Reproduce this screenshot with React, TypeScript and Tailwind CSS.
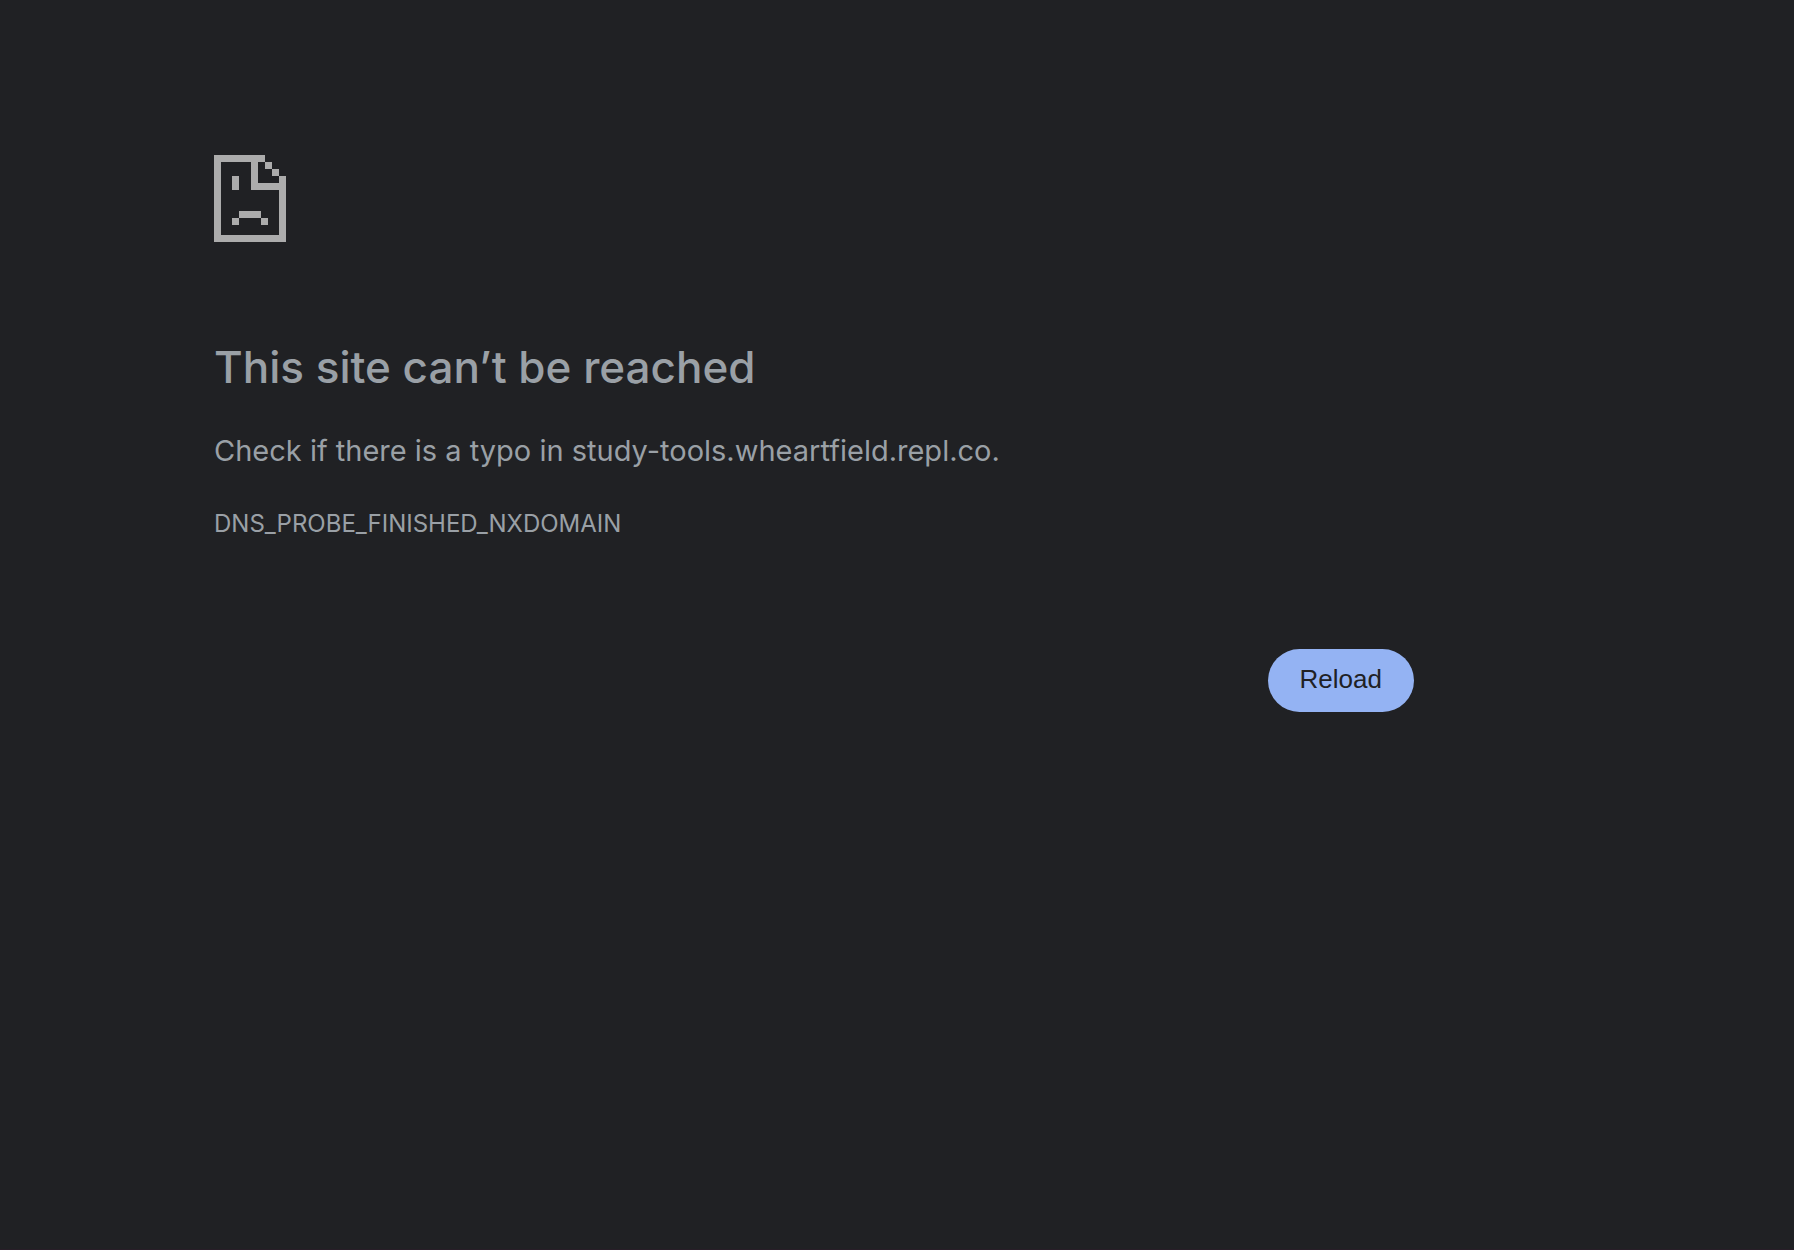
function SadPageIcon() {
  return (
    <svg
      className="block h-[87px] w-[72px]"
      viewBox="0 0 72 87"
      fill="#acacac"
      shapeRendering="crispEdges"
      aria-hidden="true"
    >
      <path d="M0 0h51v7h-7v21h21v-7h7v66H0zM7 7v73h58V35H37V7z" fillRule="evenodd" />
      <path d="M51 7h7v7h-7zM58 14h7v7h-7z" />
      <path d="M18 21h7v14h-7z" />
      <path d="M25 56h22v7H25zM18 63h7v7h-7zM47 63h7v7h-7z" />
    </svg>
  );
}

export default function App() {
  return (
    <div className="min-h-screen border-b border-[#281e28] bg-[#202124] pt-[155px] pr-8 pl-[214px] font-['Inter',sans-serif] text-[#9aa0a6]">
      <main className="max-w-[1200px]">
        <SadPageIcon />
        <h1 className="mt-[96px] text-[44px] leading-[58px] font-medium">This site can’t be reached</h1>
        <p className="mt-8 text-[29px] leading-[46px]">
          Check if there is a typo in study-tools.wheartfield.repl.co.
        </p>
        <p className="mt-8 text-[24px] leading-[36px]">DNS_PROBE_FINISHED_NXDOMAIN</p>
        <div className="mt-[107px] flex justify-end">
          <button
            type="button"
            className="cursor-pointer rounded-[32px] bg-[#94b3f3] px-8 pt-[15px] pb-[18px] font-['Liberation_Sans',Arial,sans-serif] text-[26px] leading-[30px] text-[#202124]"
            onClick={() => window.location.reload()}
          >
            Reload
          </button>
        </div>
      </main>
    </div>
  );
}
